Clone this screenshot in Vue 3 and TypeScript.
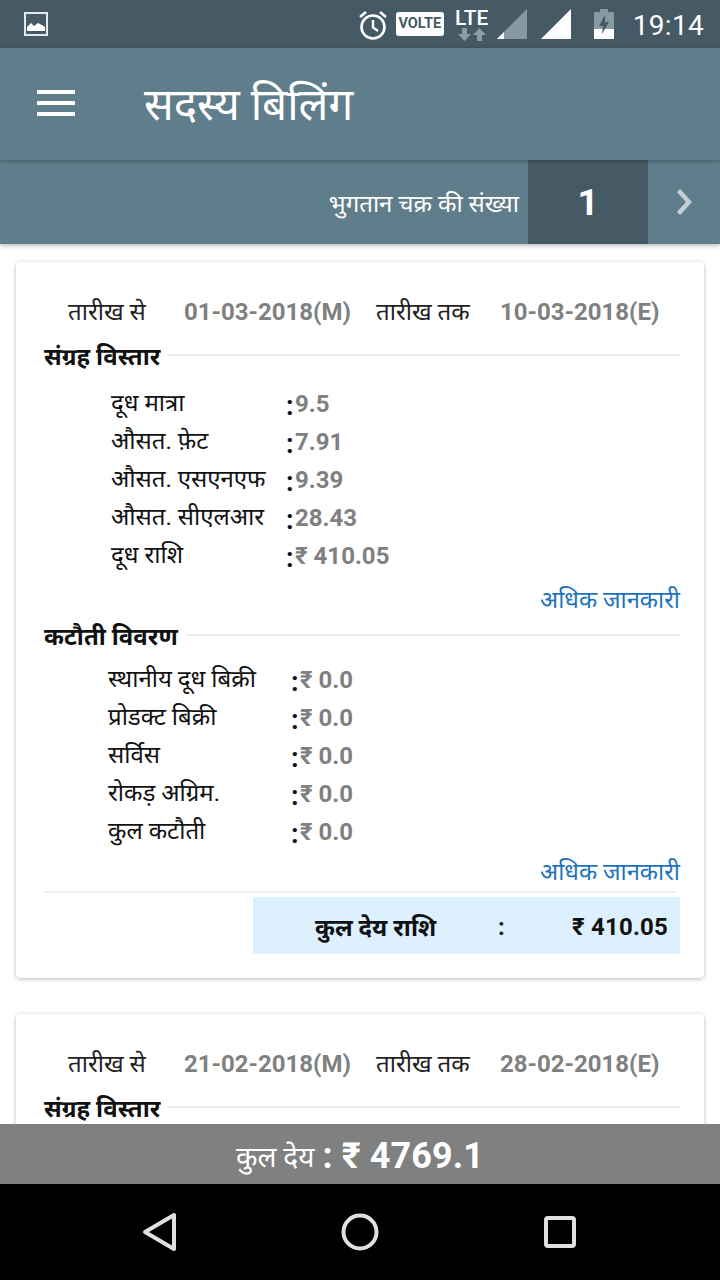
<script setup lang="ts">
interface Row { label: string; value: string }
const collection: Row[] = [
  { label: 'दूध मात्रा', value: '9.5' },
  { label: 'औसत. फ़ेट', value: '7.91' },
  { label: 'औसत. एसएनएफ', value: '9.39' },
  { label: 'औसत. सीएलआर', value: '28.43' },
  { label: 'दूध राशि', value: '₹ 410.05' },
]
const deductions: Row[] = [
  { label: 'स्थानीय दूध बिक्री', value: '₹ 0.0' },
  { label: 'प्रोडक्ट बिक्री', value: '₹ 0.0' },
  { label: 'सर्विस', value: '₹ 0.0' },
  { label: 'रोकड़ अग्रिम.', value: '₹ 0.0' },
  { label: 'कुल कटौती', value: '₹ 0.0' },
]
</script>

<template>
  <div class="phone">
    <div class="status">
      <svg class="pic" width="24" height="24" viewBox="0 0 24 24">
        <rect x="1" y="1" width="22" height="22" fill="none" stroke="#e4e9eb" stroke-width="2" />
        <path d="M3 19v-4l4-4 3 3 4-3 4 2 3 2v4z" fill="#fff" />
      </svg>
      <span class="spacer"></span>
      <svg class="alarm" width="30" height="30" viewBox="0 0 30 30">
        <circle cx="15" cy="17" r="11.5" fill="none" stroke="#fff" stroke-width="2.6" />
        <path d="M15 10v7.500l5 3.500" fill="none" stroke="#fff" stroke-width="2.400" />
        <path d="M2 7l6-5M28 7l-6-5" stroke="#fff" stroke-width="2.600" />
      </svg>
      <span class="volte">VOLTE</span>
      <div class="lte">
        <span>LTE</span>
        <svg width="30" height="13" viewBox="0 0 30 13">
          <path d="M5 0h5v6h4l-6.500 7L1 6h4zM20 13h5V7h4l-6.500-7L16 7h4z" fill="#8a9ea8" />
        </svg>
      </div>
      <svg class="sig1" width="30" height="30" viewBox="0 0 30 30">
        <path d="M0 30L30 0v30z" fill="#869aa3" />
        <path d="M0 30l7-7v7z" fill="#fff" />
      </svg>
      <svg class="sig2" width="30" height="30" viewBox="0 0 30 30">
        <path d="M0 30L30 0v30z" fill="#fff" />
      </svg>
      <svg class="batt" width="20" height="30" viewBox="0 0 20 30">
        <path d="M6 0h8v3h6v27H0V3h6z" fill="#869aa3" />
        <path d="M0 20h20v10H0z" fill="#fff" />
        <path d="M11 6l-6 11h4l-1 8 7-12h-4z" fill="#455a64" />
      </svg>
      <span class="time">19:14</span>
    </div>

    <header class="appbar">
      <div class="burger"><i></i><i></i><i></i></div>
      <h1>सदस्य बिलिंग</h1>
    </header>

    <div class="cyclebar">
      <span class="cycle-label">भुगतान चक्र की संख्या</span>
      <span class="cycle-num">1</span>
      <span class="cycle-next">
        <svg width="16" height="26" viewBox="0 0 16 26">
          <path d="M2.500 1.500L13 13 2.500 24.500" fill="none" stroke="#c5d0d6" stroke-width="4.500" />
        </svg>
      </span>
    </div>

    <main class="content">
      <section class="card">
        <div class="dates">
          <span>तारीख से</span><b>01-03-2018(M)</b>
          <span>तारीख तक</span><b>10-03-2018(E)</b>
        </div>
        <div class="section-head"><strong>संग्रह विस्तार</strong><i></i></div>
        <div class="rows rows-a">
          <div v-for="r in collection" :key="r.label" class="row">
            <span class="lbl">{{ r.label }}</span>
            <span class="colon">:</span>
            <b>{{ r.value }}</b>
          </div>
        </div>
        <a class="more more-a">अधिक जानकारी</a>
        <div class="section-head second"><strong>कटौती विवरण</strong><i></i></div>
        <div class="rows rows-b">
          <div v-for="r in deductions" :key="r.label" class="row">
            <span class="lbl">{{ r.label }}</span>
            <span class="colon">:</span>
            <b>{{ r.value }}</b>
          </div>
        </div>
        <a class="more more-b">अधिक जानकारी</a>
        <div class="rule"></div>
        <div class="total">
          <span class="t-label">कुल देय राशि</span>
          <span class="t-colon">:</span>
          <span class="t-value">₹ 410.05</span>
        </div>
      </section>

      <section class="card">
        <div class="dates">
          <span>तारीख से</span><b>21-02-2018(M)</b>
          <span>तारीख तक</span><b>28-02-2018(E)</b>
        </div>
        <div class="section-head"><strong>संग्रह विस्तार</strong><i></i></div>
      </section>
    </main>

    <div class="sumbar">
      <span class="sum-label">कुल देय</span>
      <b>: ₹ 4769.1</b>
    </div>

    <nav class="navbar">
      <svg width="36" height="40" viewBox="0 0 36 40">
        <path d="M32 3v34L3 20z" fill="none" stroke="#e0e0e0" stroke-width="4" stroke-linejoin="round" />
      </svg>
      <svg width="40" height="40" viewBox="0 0 40 40">
        <circle cx="20" cy="20" r="16.500" fill="none" stroke="#e0e0e0" stroke-width="4" />
      </svg>
      <svg width="36" height="36" viewBox="0 0 36 36">
        <rect x="4" y="4" width="28" height="28" rx="2" fill="none" stroke="#e0e0e0" stroke-width="4" />
      </svg>
    </nav>
  </div>
</template>

<style>
html, body { margin: 0; background: #fff; }
</style>

<style scoped>
.phone {
  width: 720px;
  height: 1280px;
  display: flex;
  flex-direction: column;
  overflow: hidden;
  background: #fff;
  font-family: Roboto, "Noto Sans", "Noto Sans Devanagari", "Liberation Sans", sans-serif;
  color: #111;
}
.status {
  height: 48px;
  flex: none;
  background: #455a64;
  display: flex;
  align-items: center;
  padding: 0 16px 0 24px;
  box-sizing: border-box;
}
.spacer { flex: 1; }
.alarm { margin-top: 2px; }
.volte {
  width: 48px;
  height: 24px;
  margin-left: 8px;
  background: #fff;
  border-radius: 3px;
  color: #455a64;
  font-size: 14.500px;
  font-weight: 700;
  line-height: 24px;
  text-align: center;
}
.lte {
  width: 36px;
  margin-left: 10px;
  display: flex;
  flex-direction: column;
  align-items: center;
  color: #fff;
  font-size: 21px;
  font-weight: 500;
  line-height: 20px;
}
.sig1 { margin-left: 7px; }
.sig2 { margin-left: 14px; }
.batt { margin-left: 23px; }
.time {
  margin: 2px 0 0 19px;
  color: #fff;
  font-size: 28px;
  letter-spacing: 0.3px;
}
.appbar {
  height: 112px;
  flex: none;
  background: #607d8b;
  display: flex;
  align-items: center;
  padding-left: 37px;
  color: #fff;
  position: relative;
  z-index: 2;
  box-shadow: 0 1px 4px rgba(0, 0, 0, 0.3);
}
.burger {
  width: 38px;
  display: flex;
  flex-direction: column;
  gap: 7px;
  margin-bottom: 2px;
}
.burger i { display: block; height: 4px; background: #fff; }
.appbar h1 {
  margin: 0 0 2px 69px;
  font-size: 44px;
  font-weight: 400;
}
.cyclebar {
  height: 84px;
  flex: none;
  background: #607d8b;
  display: flex;
  align-items: stretch;
  justify-content: flex-end;
  color: #fff;
  position: relative;
  z-index: 1;
  box-shadow: 0 2px 4px rgba(0, 0, 0, 0.25);
}
.cycle-label {
  align-self: center;
  margin-right: 9px;
  font-size: 24px;
}
.cycle-num {
  width: 120px;
  background: #455a64;
  display: flex;
  align-items: center;
  justify-content: center;
  font-size: 37px;
  font-weight: 700;
}
.cycle-next {
  width: 72px;
  display: flex;
  align-items: center;
  justify-content: center;
}
.content {
  flex: 1;
  min-height: 0;
  overflow: hidden;
  padding: 18px 16px 0;
  display: flex;
  flex-direction: column;
  gap: 36px;
}
.card {
  flex: none;
  box-sizing: border-box;
  background: #fff;
  border-radius: 4px;
  box-shadow: 0 1px 4px rgba(0, 0, 0, 0.28);
  padding: 32px 24px 24px 28px;
}
.dates {
  display: grid;
  grid-template-columns: 116px 192px 124px auto;
  padding-left: 24px;
  height: 36px;
  align-items: center;
  font-size: 24px;
  color: #222;
}
.dates span { margin-bottom: 3px; }
.dates b, .row b {
  color: #808080;
  font-weight: 700;
  font-size: 24px;
}
.section-head {
  display: flex;
  align-items: center;
  height: 38px;
  margin-top: 8px;
}
.section-head strong { font-size: 24px; font-weight: 700; color: #111; margin-bottom: 4px; }
.section-head i {
  flex: 1;
  height: 2px;
  background: #eceff1;
  margin: 0 0 4px 8px;
}
.section-head.second { margin-top: 0; }
.rows-a { margin-top: 9px; }
.rows-b { margin-top: 5px; }
.row {
  display: flex;
  align-items: center;
  height: 38px;
  font-size: 24px;
}
.lbl { margin-bottom: 5px; }
.rows-a .row { padding-left: 67px; }
.rows-b .row { padding-left: 64px; }
.rows-a .lbl { width: 175px; }
.rows-b .lbl { width: 183px; }
.colon { width: 9px; font-weight: 700; font-size: 27px; margin-top: 4px; }
.more {
  display: block;
  text-align: right;
  height: 36px;
  line-height: 36px;
  font-size: 23.700px;
  color: #1e73be;
}
.more-a { margin-top: 7px; }
.more-b { margin-top: 3px; }
.rule { height: 2px; background: #eceff1; margin: 1px 4px 0 0; }
.total {
  margin: 4px 0 0 209px;
  height: 57px;
  box-sizing: border-box;
  padding-top: 2px;
  background: #dcf0fd;
  display: flex;
  align-items: center;
  font-size: 24px;
  font-weight: 700;
  color: #111;
}
.t-label { margin-left: 62px; width: 183px; }
.t-colon { width: 74px; }
.t-value { white-space: nowrap; letter-spacing: 0.2px; }
.sumbar {
  height: 60px;
  flex: none;
  box-sizing: border-box;
  padding-top: 4px;
  background: #808080;
  color: #fff;
  display: flex;
  align-items: center;
  justify-content: center;
  gap: 8px;
  font-size: 28px;
}
.sumbar b { font-size: 36px; font-weight: 700; letter-spacing: 0.1px; }
.navbar {
  height: 96px;
  flex: none;
  background: #000;
  display: flex;
  align-items: center;
  justify-content: space-between;
  padding: 0 142px;
}
</style>
